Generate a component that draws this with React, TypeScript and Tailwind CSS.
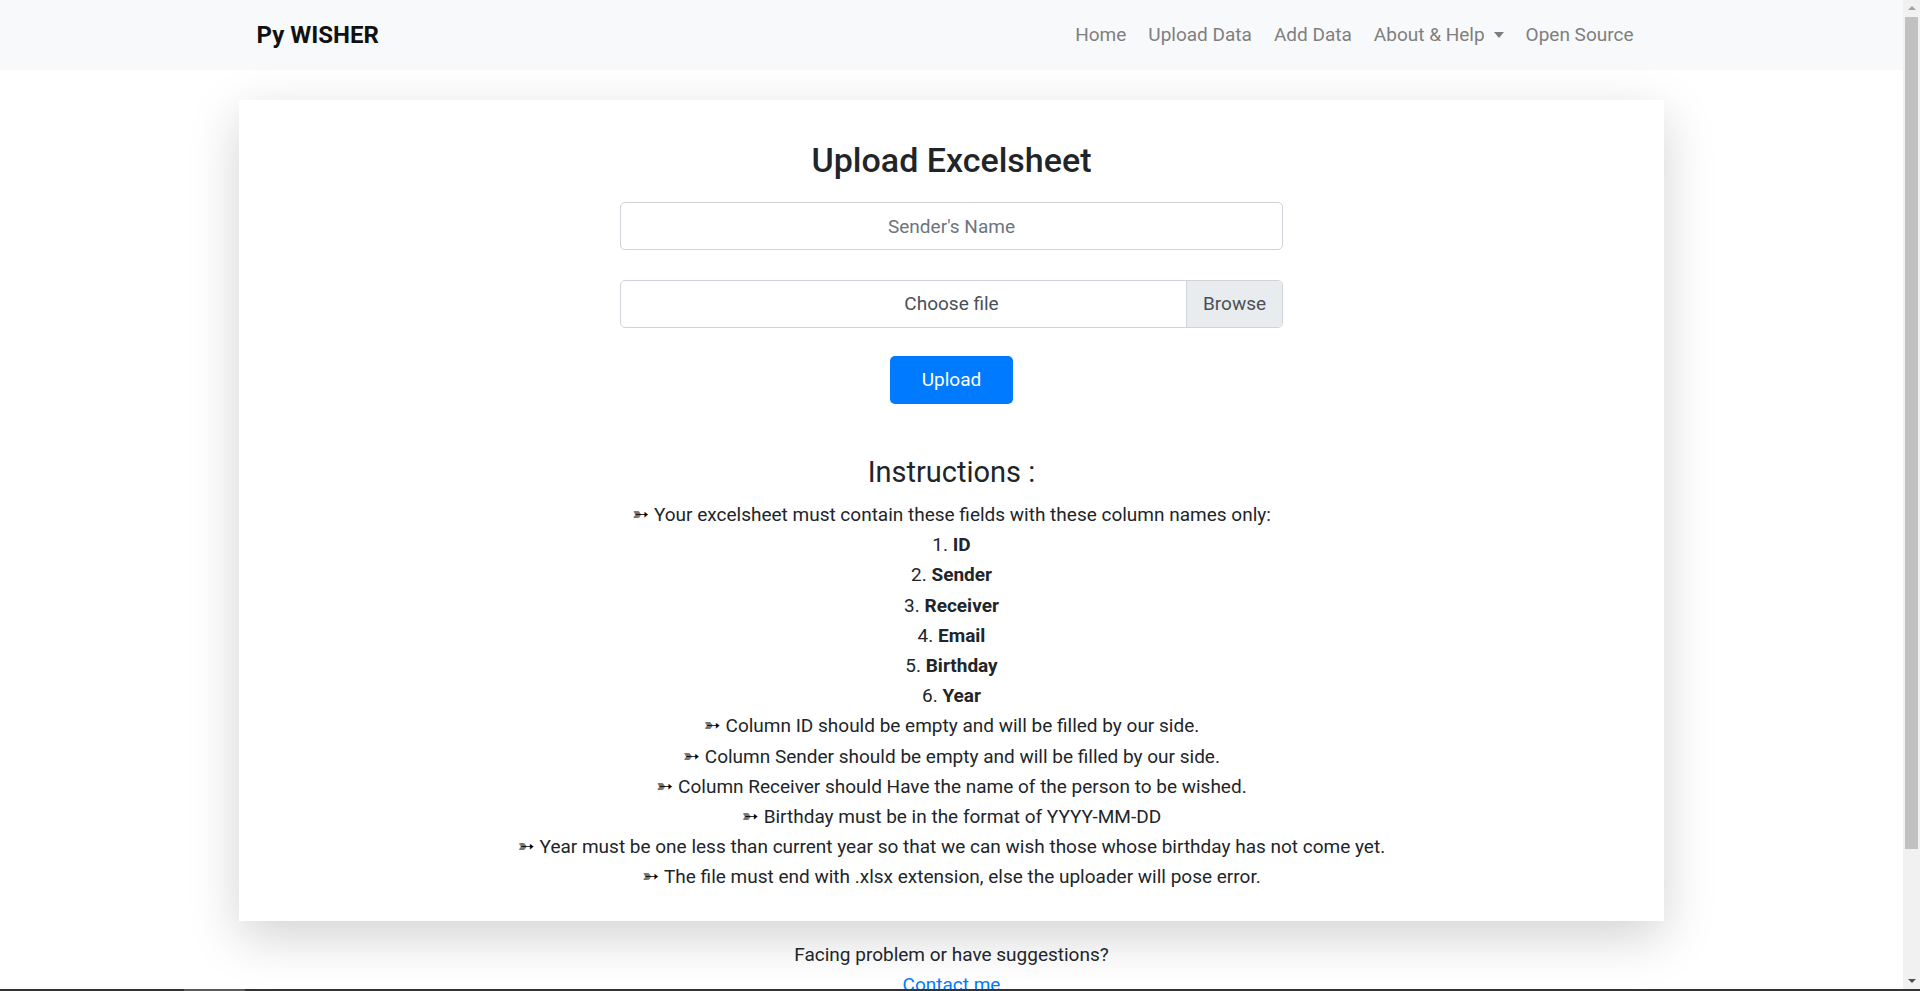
const fields = ["ID", "Sender", "Receiver", "Email", "Birthday", "Year"];

const rules = [
  "Column ID should be empty and will be filled by our side.",
  "Column Sender should be empty and will be filled by our side.",
  "Column Receiver should Have the name of the person to be wished.",
  "Birthday must be in the format of YYYY-MM-DD",
  "Year must be one less than current year so that we can wish those whose birthday has not come yet.",
  "The file must end with .xlsx extension, else the uploader will pose error.",
];

function Arrow() {
  return <span className="mr-[5px] font-['DejaVu_Sans',sans-serif] text-[20px] leading-[0] text-black">➳</span>;
}

function Navbar() {
  return (
    <nav className="h-[70px] bg-[#f8f9fa]">
      <div className="mx-auto flex h-full w-[1390px] items-center justify-between">
        <a className="text-[24px] font-bold text-[#111]">Py WISHER</a>
        <ul className="flex items-center text-[19px] text-[#7f7f7f]">
          <li className="px-[11px]">Home</li>
          <li className="px-[11px]">Upload Data</li>
          <li className="px-[11px]">Add Data</li>
          <li className="flex items-center px-[11px]">
            About &amp; Help
            <span className="ml-[9px] inline-block border-x-[5px] border-t-[6px] border-x-transparent border-t-current" />
          </li>
          <li className="pl-[11px] pr-[13px]">Open Source</li>
        </ul>
      </div>
    </nav>
  );
}

function Scrollbar() {
  return (
    <div className="fixed right-0 top-0 flex h-screen w-[17px] flex-col items-center bg-[#f1f1f1]">
      <span className="mt-[6px] inline-block border-x-[4px] border-b-[4px] border-x-transparent border-b-[#a3a3a3]" />
      <div className="mt-[7px] h-[832px] w-[13px] bg-[#c1c1c1]" />
      <span className="mt-auto mb-[8px] inline-block border-x-[4px] border-t-[4px] border-x-transparent border-t-[#505050]" />
    </div>
  );
}

export default function App() {
  return (
    <div className="min-h-screen w-[1903px] bg-white font-[Roboto,sans-serif] text-[#212529]">
      <Navbar />

      <main className="mx-auto mt-[30px] w-[1425px] bg-white px-6 pb-[28px] pt-[40px] shadow-[0_16px_48px_rgba(0,0,0,0.175)]">
        <h1 className="text-center text-[34px] font-medium leading-[40px]">Upload Excelsheet</h1>

        <form className="mx-auto mt-[22px] w-[663px]">
          <input
            type="text"
            placeholder="Sender's Name"
            className="h-[48px] w-full rounded-[5px] border border-[#ced4da] px-4 text-center text-[19px] placeholder:text-[#6c757d]"
          />
          <div className="mt-[30px] flex h-[48px] overflow-hidden rounded-[5px] border border-[#ced4da] text-[19px] text-[#495057]">
            <span className="flex flex-1 items-center justify-center pl-[96px]">Choose file</span>
            <span className="flex w-[96px] items-center justify-center border-l border-[#ced4da] bg-[#e9ecef]">Browse</span>
          </div>
          <div className="mt-[28px] flex justify-center">
            <button type="button" className="h-[48px] w-[123px] rounded-[5px] bg-[#007bff] text-[19px] text-white">
              Upload
            </button>
          </div>
        </form>

        <h2 className="mt-[48px] text-center text-[29px] leading-[40px]">Instructions :</h2>

        <div className="mt-2 text-center text-[19px] leading-[30.2px]">
          <p>
            <Arrow />
            Your excelsheet must contain these fields with these column names only:
          </p>
          {fields.map((f, i) => (
            <p key={f}>
              {i + 1}. <b className="font-bold">{f}</b>
            </p>
          ))}
          {rules.map((r) => (
            <p key={r}>
              <Arrow />
              {r}
            </p>
          ))}
        </div>
      </main>

      <footer className="mt-[19px] pb-6 text-center text-[19px] leading-[30px]">
        <p>Facing problem or have suggestions?</p>
        <a className="text-[#007bff]">Contact me</a>
      </footer>

      <Scrollbar />

      <div className="fixed bottom-0 left-0 flex h-[2px] w-full bg-[#333]">
        <div className="ml-[184px] w-[61px] bg-[#5a5a5a]" />
      </div>
    </div>
  );
}
